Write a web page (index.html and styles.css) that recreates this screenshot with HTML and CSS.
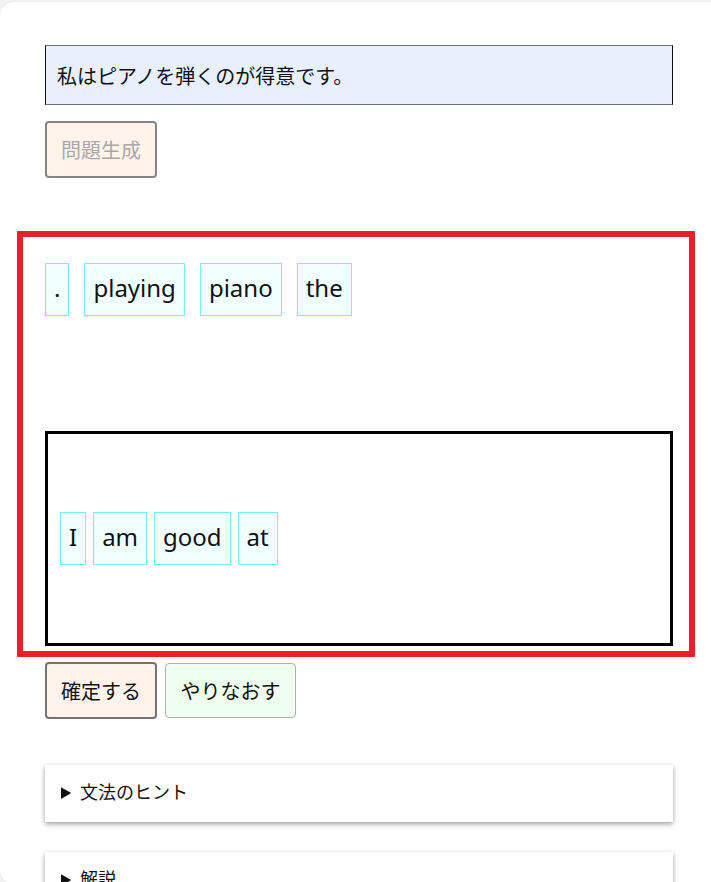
FILE: index.html
```html
<!DOCTYPE html>
<html lang="ja">
<head>
<meta charset="utf-8">
<title>並べ替え問題</title>
<link rel="stylesheet" href="styles.css">
</head>
<body>
<div class="panel">
  <div class="content">
    <input class="source" type="text" value="私はピアノを弾くのが得意です。">
    <div class="row gen-row">
      <button class="btn btn-gen" disabled>問題生成</button>
    </div>
    <div class="word-bank">
      <span class="chip">.</span>
      <span class="chip">playing</span>
      <span class="chip">piano</span>
      <span class="chip">the</span>
    </div>
    <div class="answer">
      <span class="chip">I</span>
      <span class="chip">am</span>
      <span class="chip">good</span>
      <span class="chip">at</span>
    </div>
    <div class="row actions">
      <button class="btn btn-ok">確定する</button>
      <button class="btn btn-retry">やりなおす</button>
    </div>
    <details class="card hint">
      <summary>文法のヒント</summary>
    </details>
    <details class="card explain">
      <summary>解説</summary>
    </details>
  </div>
  <div class="highlight"></div>
</div>
</body>
</html>
```
FILE: styles.css
```css
html, body {
  margin: 0;
  padding: 0;
  overflow: hidden;
  background: #f2f2f2;
}
body {
  font-family: "Noto Sans", "Noto Sans CJK JP", sans-serif;
  color: #111;
}
.panel {
  position: relative;
  margin-top: 2px;
  width: 711px;
  height: 882px;
  background: #fff;
  border-radius: 14px 0 0 14px;
  box-shadow: 0 0 1px rgba(0,0,0,0.15);
  box-sizing: border-box;
  padding: 43px 0 0 45px;
}
.content {
  width: 628px;
  display: flex;
  flex-direction: column;
}
.source {
  box-sizing: border-box;
  width: 628px;
  height: 60px;
  margin: 0;
  padding: 0 11px;
  font-family: "Noto Sans CJK JP", sans-serif;
  font-size: 20px;
  color: #111;
  background: #e8f0fe;
  border: 1px solid;
  border-color: #6f6f6f #111 #6f6f6f #111;
  border-radius: 0;
  outline: none;
}
.row {
  display: flex;
  align-items: center;
  gap: 8px;
}
.gen-row {
  margin-top: 16px;
}
.btn {
  box-sizing: border-box;
  font-family: "Noto Sans CJK JP", sans-serif;
  font-size: 20px;
  line-height: 29px;
  border-radius: 4px;
  margin: 0;
}
.btn-gen {
  height: 57px;
  padding: 0 14px;
  border: 2px solid #858585;
  background: #fff3ec;
  color: #a8a8a8;
}
.word-bank {
  margin-top: 85px;
  display: flex;
  gap: 15px;
}
.chip {
  display: inline-block;
  box-sizing: border-box;
  height: 53px;
  line-height: 47px;
  padding: 0 8px 4px;
  border: 1px solid #7eeaf0;
  background: #f0ffff;
  font-family: "Noto Sans", sans-serif;
  font-size: 24px;
  color: #111;
}
.answer {
  margin-top: 115px;
  box-sizing: border-box;
  height: 215px;
  border: 3px solid #000;
  padding: 0 12px;
  display: flex;
  align-items: center;
  gap: 7px;
}
.actions {
  margin-top: 16px;
}
.btn-ok {
  height: 57px;
  padding: 0 14px;
  border: 2px solid #747474;
  background: #fff3ec;
  color: #111;
}
.btn-retry {
  height: 55px;
  padding: 0 14.5px;
  border: 1px solid #b0b0b0;
  background: #efffef;
  color: #111;
}
.card {
  box-sizing: border-box;
  width: 628px;
  background: #fff;
  box-shadow: 0 2px 5px rgba(0,0,0,0.38);
  padding: 14px 16px 18px;
}
.card summary {
  font-family: "Noto Sans CJK JP", sans-serif;
  font-size: 18px;
  line-height: 25px;
  cursor: pointer;
}
.hint {
  margin-top: 46px;
}
.explain {
  margin-top: 30px;
}
.highlight {
  position: absolute;
  left: 17px;
  top: 229px;
  width: 678px;
  height: 426px;
  box-sizing: border-box;
  border: 6px solid #e8202a;
  pointer-events: none;
}
```
